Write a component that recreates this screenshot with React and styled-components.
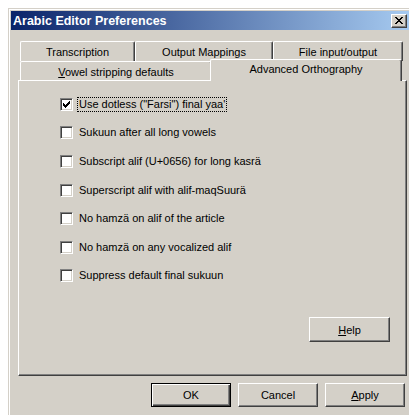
import styled, { createGlobalStyle } from "styled-components";

const face = "#D4D0C8";
const shadow = "#808080";
const darkShadow = "#404040";

const GlobalStyle = createGlobalStyle`
  html, body {
    margin: 0;
    background: #ffffff;
    overflow: hidden;
  }
  body {
    font-family: "Liberation Sans", Arial, sans-serif;
    font-size: 11px;
    color: #000;
  }
`;

const Page = styled.div`
  padding: 8px 0 0 8px;
  width: 409px;
  height: 415px;
  box-sizing: border-box;
`;

const Window = styled.div`
  width: 404px;
  height: 420px;
  box-sizing: border-box;
  background: ${face};
  border: 1px solid;
  border-color: ${face} ${darkShadow} ${darkShadow} ${face};
  box-shadow: inset 1px 1px #ffffff, inset -1px -1px ${shadow};
  padding: 2px;
  display: flex;
  flex-direction: column;
`;

const TitleBar = styled.div`
  height: 19px;
  flex: none;
  display: flex;
  align-items: center;
  justify-content: space-between;
  padding: 0 2px 0 2px;
  background: linear-gradient(to right, #0a246a, #a6caf0);
  color: #ffffff;
  font-weight: bold;
  font-size: 12.5px;
`;

const CloseButton = styled.div`
  width: 16px;
  height: 14px;
  box-sizing: border-box;
  background: ${face};
  border: 1px solid;
  border-color: #ffffff ${darkShadow} ${darkShadow} #ffffff;
  box-shadow: inset -1px -1px ${shadow};
  display: flex;
  align-items: center;
  justify-content: center;
`;

const Body = styled.div`
  padding: 11px 2px 0 7px;
  display: flex;
  flex-direction: column;
`;

const TabRow = styled.div`
  display: flex;
  height: ${(p) => p.$h}px;
  padding-left: 2px;
`;

const Tab = styled.div`
  width: ${(p) => p.$w}px;
  box-sizing: border-box;
  flex: none;
  display: flex;
  align-items: center;
  justify-content: center;
  background: ${face};
  border-top: 1px solid #ffffff;
  border-left: 1px solid #ffffff;
  border-right: 1px solid ${darkShadow};
  box-shadow: inset -1px 0 ${shadow};
  border-top-left-radius: 2px;
  border-top-right-radius: 2px;
  padding-top: 1px;

  ${(p) =>
    p.$active &&
    `
    margin: -2px -2px -1px -2px;
    position: relative;
    z-index: 1;
    align-items: flex-start;
    padding-top: 3px;
  `}
`;

const Panel = styled.div`
  height: 296px;
  box-sizing: border-box;
  border: 1px solid;
  border-color: #ffffff ${darkShadow} ${darkShadow} #ffffff;
  box-shadow: inset -1px -1px ${shadow};
  padding: 9px 16px 33px 41px;
  display: flex;
  flex-direction: column;
`;

const OptionList = styled.div`
  display: flex;
  flex-direction: column;
`;

const OptionRow = styled.label`
  height: 28.6px;
  display: flex;
  align-items: center;
  gap: 4px;
`;

const CheckBox = styled.span`
  width: 13px;
  height: 13px;
  box-sizing: border-box;
  flex: none;
  background: #ffffff;
  border: 1px solid;
  border-color: ${shadow} #ffffff #ffffff ${shadow};
  box-shadow: inset 1px 1px ${darkShadow}, inset -1px -1px ${face};
  display: flex;
  align-items: center;
  justify-content: center;
`;

const OptionText = styled.span`
  padding: 0 1px;
  border: 1px dotted ${(p) => (p.$focused ? "#000" : "transparent")};
  line-height: 13px;
`;

const PanelFooter = styled.div`
  margin-top: auto;
  display: flex;
  justify-content: flex-end;
`;

const Button = styled.button`
  width: ${(p) => p.$w || 80}px;
  height: ${(p) => p.$h || 24}px;
  box-sizing: border-box;
  margin: 0;
  padding: 0;
  background: ${face};
  font-family: "Liberation Sans", Arial, sans-serif;
  font-size: 11px;
  color: #000;
  border: 1px solid;
  border-color: #ffffff ${darkShadow} ${darkShadow} #ffffff;
  box-shadow: inset -1px -1px ${shadow};

  ${(p) =>
    p.$default &&
    `
    border: 1px solid #000;
    box-shadow: inset 1px 1px #ffffff, inset -1px -1px ${darkShadow}, inset -2px -2px ${shadow};
  `}
`;

const ButtonBar = styled.div`
  margin-top: 7px;
  display: flex;
  justify-content: flex-end;
  gap: 7px;
  padding-right: 2px;
`;

const options = [
  { label: 'Use dotless ("Farsi") final yaa\'', checked: true },
  { label: "Sukuun after all long vowels" },
  { label: "Subscript alif (U+0656) for long kasrä" },
  { label: "Superscript alif with alif-maqSuurä" },
  { label: "No hamzä on alif of the article" },
  { label: "No hamzä on any vocalized alif" },
  { label: "Suppress default final sukuun" },
];

// 7x7 pixel tick used by classic checkboxes
const CheckMark = () => (
  <svg width="7" height="7" viewBox="0 0 7 7" shapeRendering="crispEdges">
    <path
      fill="#000"
      d="M6 0h1v3h-1zM5 1h1v3h-1zM4 2h1v3h-1zM3 3h1v3h-1zM2 4h1v3h-1zM1 3h1v3h-1zM0 2h1v3h-1z"
    />
  </svg>
);

const CloseGlyph = () => (
  <svg width="8" height="7" viewBox="0 0 8 7" shapeRendering="crispEdges">
    <path
      fill="#000"
      d="M0 0h2v1h-2zM6 0h2v1h-2zM1 1h2v1h-2zM5 1h2v1h-2zM2 2h4v1h-4zM3 3h2v1h-2zM2 4h4v1h-4zM1 5h2v1h-2zM5 5h2v1h-2zM0 6h2v1h-2zM6 6h2v1h-2z"
    />
  </svg>
);

export default function App() {
  return (
    <Page>
      <GlobalStyle />
      <Window>
        <TitleBar>
          <span>Arabic Editor Preferences</span>
          <CloseButton>
            <CloseGlyph />
          </CloseButton>
        </TitleBar>
        <Body>
          <TabRow $h={20}>
            <Tab $w={115}>Transcription</Tab>
            <Tab $w={138}>Output Mappings</Tab>
            <Tab $w={130}>File input/output</Tab>
          </TabRow>
          <TabRow $h={19}>
            <Tab $w={192}>
              <span>
                <u>V</u>owel stripping defaults
              </span>
            </Tab>
            <Tab $w={192} $active>
              Advanced Orthography
            </Tab>
          </TabRow>
          <Panel>
            <OptionList>
              {options.map((o, i) => (
                <OptionRow key={i}>
                  <CheckBox>{o.checked && <CheckMark />}</CheckBox>
                  <OptionText $focused={i === 0}>{o.label}</OptionText>
                </OptionRow>
              ))}
            </OptionList>
            <PanelFooter>
              <Button $w={81} $h={25}>
                <u>H</u>elp
              </Button>
            </PanelFooter>
          </Panel>
          <ButtonBar>
            <Button $default>OK</Button>
            <Button>Cancel</Button>
            <Button>
              <u>A</u>pply
            </Button>
          </ButtonBar>
        </Body>
      </Window>
    </Page>
  );
}
